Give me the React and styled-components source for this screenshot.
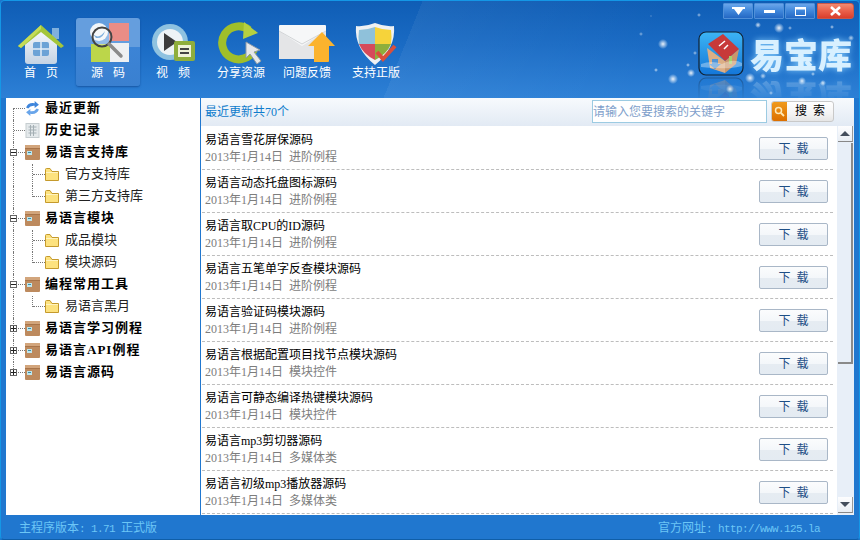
import React from 'react';
import styled, { createGlobalStyle } from 'styled-components';

const GlobalStyle = createGlobalStyle`
  html, body { margin: 0; padding: 0; background: #1f75cc; }
  * { box-sizing: border-box; }
`;

const CJK = '"Liberation Serif", "Noto Sans CJK SC", serif';
const MONO = '"Liberation Mono", "Noto Sans CJK SC", monospace';

const star = (x, y, r, a = 0.9) =>
  `radial-gradient(circle ${r}px at ${x}px ${y}px, rgba(255,255,255,${a}), rgba(255,255,255,0))`;

const stars = [
  [662, 43, 5], [672, 78, 5], [690, 72, 4], [655, 69, 2, 0.7], [687, 64, 2, 0.7], [698, 14, 2, 0.6],
  [694, 52, 2, 0.6], [778, 27, 5], [757, 24, 3, 0.8], [789, 27, 2, 0.6], [749, 77, 5], [729, 88, 4],
  [801, 80, 4], [762, 75, 3, 0.7], [822, 82, 3, 0.8], [812, 73, 2, 0.7], [831, 26, 2, 0.7], [850, 37, 3, 0.7],
  [640, 33, 2, 0.5], [650, 15, 1, 0.4], [845, 60, 2, 0.6], [770, 92, 2, 0.6],
].map((s) => star(...s)).join(', ');

const Window = styled.div`
  width: 860px;
  height: 540px;
  display: flex;
  flex-direction: column;
  overflow: hidden;
  background: #2077cf;
  border: 1px solid #1497e6;
  border-bottom-color: #0f5ea8;
  border-radius: 5px 5px 4px 4px;
  font-family: ${CJK};
`;

const Header = styled.header`
  flex: 0 0 97px;
  display: flex;
  justify-content: space-between;
  overflow: hidden;
  background: ${stars},
    linear-gradient(112deg, rgba(255,255,255,0) 47%, rgba(255,255,255,.05) 47%, rgba(255,255,255,0) 75%),
    linear-gradient(180deg, #0f5db5 0%, #1a6bc4 45%, #2d80d6 100%);
`;

const Toolbar = styled.nav`
  display: flex;
  gap: 2px;
  padding: 17px 0 0 7px;
`;

const ToolButton = styled.div`
  width: ${(p) => p.$width}px;
  height: 68px;
  display: flex;
  flex-direction: column;
  align-items: center;
  padding-top: 4px;
  color: #fff;
  border-radius: 3px;
  background: ${(p) =>
    p.$active ? 'linear-gradient(180deg, #659ede 0%, #659ede 42%, #3c84d6 43%, #3a80d0 100%)' : 'none'};
  box-shadow: ${(p) => (p.$active ? '0 1px 2px rgba(10,60,130,.6)' : 'none')};

  svg { display: block; width: ${(p) => p.$iconWidth || 50}px; height: 44px; flex: none; }
`;

const ToolLabel = styled.span`
  font-size: 12px;
  line-height: 15px;
  word-spacing: 2px;
  white-space: pre;
`;

const Brand = styled.div`
  width: 160px;
  display: flex;
  flex-direction: column;
  align-items: flex-end;
`;

const WindowControls = styled.div`
  display: flex;
  gap: 1px;
  margin-top: 2px;
  margin-right: 5px;
`;

const ControlButton = styled.div`
  width: ${(p) => (p.$close ? 37 : 30)}px;
  margin-left: ${(p) => (p.$close ? 1 : 0)}px;
  height: 16px;
  display: flex;
  align-items: center;
  justify-content: center;
  border: 1px solid ${(p) => (p.$close ? '#c8584a' : '#4f8fd8')};
  border-radius: ${(p) => (p.$close ? '0 3px 3px 0' : '1px')};
  background: ${(p) =>
    p.$close
      ? 'linear-gradient(180deg, #f08a70 0%, #e9604a 50%, #d93e2c 100%)'
      : 'linear-gradient(180deg, #6aa6ea 0%, #3f86da 50%, #2468c4 100%)'};

  svg { display: block; }
`;

const LogoRow = styled.div`
  display: flex;
  align-items: center;
  gap: 6px;
  margin: 12px 7px 0 0;
  -webkit-box-reflect: below -1px linear-gradient(rgba(0,0,0,0) 45%, rgba(255,255,255,.35));
`;

const LogoTile = styled.svg`
  width: 46px;
  height: 46px;
  flex: none;
`;

const LogoText = styled.div`
  font-family: "Noto Sans CJK SC", sans-serif;
  font-weight: 900;
  font-size: 34px;
  line-height: 40px;
  white-space: nowrap;
  width: 102px;
  color: #d8f0ff;
  text-shadow: 0 0 6px rgba(140, 210, 255, .9);
`;

const Body = styled.div`
  flex: 1;
  min-height: 0;
  display: flex;
  margin: 0 5px;
`;

const Sidebar = styled.aside`
  flex: 0 0 194px;
  background: #fff;
`;

const TreeRow = styled.div`
  position: relative;
  height: 22px;
  display: flex;
  align-items: center;
  padding-left: ${(p) => (p.$child ? 39 : 19)}px;
  padding-bottom: 2px;

  /* trunk of the tree */
  &::before {
    content: '';
    position: absolute;
    left: 7px;
    top: ${(p) => (p.$first ? '10px' : '0')};
    bottom: ${(p) => (p.$last ? '11px' : '0')};
    border-left: 1px dotted #777;
  }

  /* guide line of a child row */
  &::after {
    content: ${(p) => (p.$child ? "''" : 'none')};
    position: absolute;
    left: 26px;
    top: 0;
    bottom: ${(p) => (p.$lastChild ? '11px' : '0')};
    border-left: 1px dotted #777;
  }

  svg { flex: none; position: relative; }
`;

const Tick = styled.span`
  position: absolute;
  left: ${(p) => (p.$child ? 27 : 8)}px;
  width: ${(p) => (p.$child ? 12 : 11)}px;
  top: 10px;
  border-top: 1px dotted #777;
`;

const Expander = styled.span`
  position: absolute;
  z-index: 1;
  left: 4px;
  top: 7px;
  width: 7px;
  height: 7px;
  background: #fff;
  border: 1px solid #666;

  &::before {
    content: '';
    position: absolute;
    left: 0;
    right: 0;
    top: 2px;
    border-top: 1px solid #222;
  }

  &::after {
    content: ${(p) => (p.$closed ? "''" : 'none')};
    position: absolute;
    top: 0;
    bottom: 0;
    left: 2px;
    border-left: 1px solid #222;
  }
`;

const TreeLabel = styled.span`
  margin-left: ${(p) => (p.$child ? 6 : 5)}px;
  font-size: 13px;
  line-height: 16px;
  letter-spacing: ${(p) => (p.$child ? 0 : 1)}px;
  font-weight: ${(p) => (p.$child ? 400 : 700)};
  color: ${(p) => (p.$child ? '#222' : '#000')};
  white-space: nowrap;
`;

const Main = styled.main`
  flex: 1;
  min-width: 0;
  display: flex;
  flex-direction: column;
  margin-left: 1px;
  background: #fff;
`;

const TopBar = styled.div`
  flex: 0 0 28px;
  display: flex;
  align-items: center;
  padding: 0 20px 2px 4px;
  background: linear-gradient(180deg, #f7fafd 0%, #e2eaf4 100%);
`;

const Count = styled.span`
  flex: 1;
  color: #0f7ccc;
  font-size: 12px;
  line-height: 16px;
  padding-top: 1px;
`;

const SearchField = styled.div`
  width: 175px;
  height: 23px;
  display: flex;
  align-items: center;
  background: #fff;
  border: 1px solid #9ccbe2;
  color: #7f9fcb;
  font-size: 12px;
`;

const SearchButton = styled.div`
  width: 63px;
  height: 21px;
  margin-left: 4px;
  display: flex;
  overflow: hidden;
  border: 1px solid #c9c9c9;
  border-radius: 3px;
  background: linear-gradient(180deg, #fff 0%, #f4f4f4 60%, #e6e6e6 100%);
`;

const SearchIcon = styled.div`
  flex: 0 0 15px;
  display: flex;
  align-items: center;
  justify-content: center;
  background: linear-gradient(180deg, #f09a1c 0%, #dc6f00 100%);
`;

const SearchLabel = styled.div`
  flex: 1;
  text-align: center;
  font-size: 12px;
  line-height: 19px;
  color: #000;
  white-space: pre;
`;

const Content = styled.div`
  flex: 1;
  min-height: 0;
  display: flex;
`;

const List = styled.div`
  flex: 1;
  min-width: 0;
  padding: 1px 4px 0 1px;
`;

const Row = styled.div`
  height: 43px;
  display: flex;
  align-items: center;
  justify-content: space-between;
  border-bottom: 1px dashed #bdbdbd;
  padding: 0 5px 0 3px;
`;

const RowText = styled.div`
  display: flex;
  flex-direction: column;
  padding-top: 1px;
`;

const RowTitle = styled.div`
  font-size: 12px;
  line-height: 17px;
  color: #000;
  white-space: nowrap;
`;

const RowMeta = styled.div`
  font-size: 12px;
  line-height: 17px;
  color: #7d7d7d;
  white-space: nowrap;

  span { margin-left: 6px; }
`;

const DownloadButton = styled.div`
  width: 69px;
  height: 23px;
  margin-top: 1px;
  text-align: center;
  font-size: 12px;
  line-height: 23px;
  color: #1f4f86;
  white-space: pre;
  border: 1px solid #a9b7c7;
  border-radius: 2px;
  background: linear-gradient(180deg, #fbfcfd 0%, #f4f7fa 50%, #e6ecf2 52%, #e4ebf2 100%);
`;

const Scrollbar = styled.div`
  flex: 0 0 17px;
  display: flex;
  flex-direction: column;
  padding: 0 1px 2px 1px;
  background: #e8eff8;
`;

const ScrollArrow = styled.div`
  flex: 0 0 16px;
  display: flex;
  align-items: center;
  justify-content: center;
  background: linear-gradient(180deg, #fdfdfe 0%, #e9eef4 100%);
  border-right: 1px solid #999;
  border-bottom: 1px solid #888;

  &::before {
    content: '';
    border-left: 5px solid transparent;
    border-right: 5px solid transparent;
    ${(p) => (p.$down ? 'border-top' : 'border-bottom')}: 5px solid #444e5c;
  }
`;

const ScrollThumb = styled.div`
  flex: 0 0 221px;
  margin-top: 1px;
  background: #e8eff8;
  border-right: 2px solid #8a8a8a;
  border-bottom: 2px solid #8a8a8a;
`;

const ScrollGap = styled.div`
  flex: 1;
`;

const StatusBar = styled.footer`
  flex: 0 0 24px;
  display: flex;
  justify-content: space-between;
  align-items: center;
  padding: 0 39px 0 18px;
  font-size: 12px;
  color: #6cc6f6;
  white-space: pre;
`;

const Mono = styled.span`
  font-family: ${MONO};
  font-size: 11px;
  letter-spacing: -0.6px;
`;

const tree = [
  { label: '最近更新', icon: 'refresh', first: true },
  { label: '历史记录', icon: 'history' },
  { label: '易语言支持库', icon: 'box', open: true },
  { label: '官方支持库', child: true },
  { label: '第三方支持库', child: true, lastChild: true },
  { label: '易语言模块', icon: 'box', open: true },
  { label: '成品模块', child: true },
  { label: '模块源码', child: true, lastChild: true },
  { label: '编程常用工具', icon: 'box', open: true },
  { label: '易语言黑月', child: true, lastChild: true },
  { label: '易语言学习例程', icon: 'box', closed: true },
  { label: '易语言API例程', icon: 'box', closed: true },
  { label: '易语言源码', icon: 'box', closed: true, last: true },
];

const rows = [
  ['易语言雪花屏保源码', '进阶例程'],
  ['易语言动态托盘图标源码', '进阶例程'],
  ['易语言取CPU的ID源码', '进阶例程'],
  ['易语言五笔单字反查模块源码', '进阶例程'],
  ['易语言验证码模块源码', '进阶例程'],
  ['易语言根据配置项目找节点模块源码', '模块控件'],
  ['易语言可静态编译热键模块源码', '模块控件'],
  ['易语言mp3剪切器源码', '多媒体类'],
  ['易语言初级mp3播放器源码', '多媒体类'],
];

const HomeIcon = () => (
  <svg viewBox="0 0 50 44">
    <defs>
      <linearGradient id="homeWall" x1="0" y1="0" x2="0" y2="1">
        <stop offset="0" stopColor="#f6f8fb" />
        <stop offset="1" stopColor="#c3d3e4" />
      </linearGradient>
    </defs>
    <rect x="36" y="6" width="7" height="11" fill="#7fb0dd" />
    <path d="M9 22 L25 8 L41 22 V39 Q41 42 38 42 H12 Q9 42 9 39 Z" fill="url(#homeWall)" />
    <path d="M2 24 L25 3 L48 24 L45 26 L25 10 L5 26 Z" fill="#a4c63a" />
    <path d="M2 24 L25 3 L25 7 L5 26 Z" fill="#c4dc58" />
    <rect x="17" y="20" width="16" height="14" rx="2" fill="#6ca3d6" />
    <path d="M25 20 V34 M17 27 H33" stroke="#e4eef7" strokeWidth="1.5" />
  </svg>
);

const SourceIcon = () => (
  <svg viewBox="0 0 50 44">
    <circle cx="16" cy="10" r="9" fill="#f2f5f8" />
    <path d="M10 12 Q16 18 22 9 Q20 17 13 16 Z" fill="#4b8fd0" />
    <rect x="26" y="1" width="20" height="18" fill="#ea8d86" />
    <rect x="8" y="22" width="19" height="18" fill="#bcd64a" />
    <rect x="27" y="21" width="19" height="19" fill="#eef0f2" />
    <circle cx="19" cy="15" r="9.5" fill="rgba(255,255,255,.3)" stroke="#444" strokeWidth="2" />
    <path d="M26 22 L38 34" stroke="#8a8a8a" strokeWidth="3.5" strokeLinecap="round" />
  </svg>
);

const VideoIcon = () => (
  <svg viewBox="0 0 50 44">
    <circle cx="22" cy="20" r="18" fill="#8fc2e0" />
    <circle cx="22" cy="20" r="13" fill="#eef3f6" />
    <path d="M16 11 L29 20 L16 29 Z" fill="#3b3b3b" />
    <rect x="26" y="19" width="21" height="20" rx="2" fill="#8fae3c" />
    <rect x="30" y="23" width="13" height="12" fill="#eef2d8" />
    <path d="M32 27 H41 M32 31 H41" stroke="#444" strokeWidth="2" />
  </svg>
);

const ShareIcon = () => (
  <svg viewBox="0 0 50 44">
    <path d="M38 27 A16.5 16.5 0 1 1 33 8" fill="none" stroke="#a0bf2a" strokeWidth="8" />
    <path d="M28 0 L42 11 L27 17 Z" fill="#b6d040" />
    <path d="M30 20 L30 36 L34 32 L41 42 L45 39 L38 30 L44 28 Z" fill="#e6e8ea" stroke="#8d9aa6" strokeWidth="1" />
  </svg>
);

const MailIcon = () => (
  <svg viewBox="0 0 56 44">
    <rect x="0" y="3" width="47" height="34" rx="1" fill="#f6f7f8" />
    <path d="M0 9 L23 24 L47 9 V37 H0 Z" fill="#e4e5e7" />
    <path d="M0 9 L23 22 L47 9" fill="none" stroke="#d2d4d6" strokeWidth="1" />
    <path d="M35 40 V24 H29 L43 10 L56 24 H50 V39 Q50 40 49 40 Z" fill="#fbb32e" />
  </svg>
);

const ShieldIcon = () => (
  <svg viewBox="0 0 50 44">
    <path d="M24 1 Q34 5 43 4 Q45 26 24 43 Q3 26 5 4 Q14 5 24 1 Z" fill="#eef1f3" />
    <path d="M24 5 V22 H8 Q7 14 8 8 Q16 8 24 5 Z" fill="#8fc1da" />
    <path d="M24 5 Q32 8 40 8 Q41 14 40 22 H24 Z" fill="#f6d33a" />
    <path d="M8 22 H24 V38 Q12 32 8 22 Z" fill="#d64a5a" />
    <path d="M24 22 H40 Q36 32 24 38 Z" fill="#8fae3c" />
    <path d="M26 30 L32 37 L44 24" fill="none" stroke="#d94f3c" strokeWidth="4" />
  </svg>
);

const toolIcons = {
  home: <HomeIcon />,
  source: <SourceIcon />,
  video: <VideoIcon />,
  share: <ShareIcon />,
  mail: <MailIcon />,
  shield: <ShieldIcon />,
};

const tools = [
  { label: '首  页', icon: 'home', width: 66 },
  { label: '源  码', icon: 'source', width: 64, active: true },
  { label: '视  频', icon: 'video', width: 62 },
  { label: '分享资源', icon: 'share', width: 70 },
  { label: '问题反馈', icon: 'mail', width: 58, iconWidth: 56 },
  { label: '支持正版', icon: 'shield', width: 76 },
];

const BoxIcon = () => (
  <svg width="15" height="15" viewBox="0 0 15 15">
    <rect x="0" y="0" width="15" height="15" rx="1" fill="#bd8a5e" />
    <rect x="0" y="0" width="15" height="3" fill="#d2a57c" />
    <rect x="0" y="3" width="15" height="1" fill="#a87449" />
    <rect x="2" y="6" width="5" height="4" fill="#bfe6ee" />
    <rect x="3" y="7" width="3" height="1" fill="#3b8fa8" />
  </svg>
);

const FolderIcon = () => (
  <svg width="14" height="13" viewBox="0 0 14 13">
    <path d="M.5 12.5 V1.5 Q.5 .5 1.5 .5 H5 L7 3.5 H13.5 V12.5 Z" fill="#fde27e" stroke="#c59a2c" />
    <rect x="1" y="4" width="12" height="1" fill="#fff3bf" />
  </svg>
);

const RefreshIcon = () => (
  <svg width="15" height="15" viewBox="0 0 14 14">
    <path d="M1 6 Q3 1 9 2 L9 0 L13 3.5 L9 6.5 L9 4.5 Q5 4 3 7 Z" fill="#3f86dc" />
    <path d="M13 8 Q11 13 5 12 L5 14 L1 10.5 L5 7.5 L5 9.5 Q9 10 11 7 Z" fill="#69a5ea" />
  </svg>
);

const HistoryIcon = () => (
  <svg width="15" height="15" viewBox="0 0 14 15">
    <rect x=".5" y=".5" width="13" height="14" fill="#e4e9eb" stroke="#c6cdd0" />
    <path d="M3 4 H11 M3 7 H11 M3 10 H11 M5 2 V13 M8 2 V13" stroke="#a4afb4" strokeWidth="1" />
  </svg>
);

const treeIcons = { box: <BoxIcon />, refresh: <RefreshIcon />, history: <HistoryIcon /> };

const App = () => (
  <Window>
    <GlobalStyle />
    <Header>
      <Toolbar>
        {tools.map((tool) => (
          <ToolButton key={tool.icon} $width={tool.width} $active={tool.active} $iconWidth={tool.iconWidth}>
            {toolIcons[tool.icon]}
            <ToolLabel>{tool.label}</ToolLabel>
          </ToolButton>
        ))}
      </Toolbar>
      <Brand>
        <WindowControls>
          <ControlButton>
            <svg width="13" height="9" viewBox="0 0 13 9">
              <path d="M0 0 H13 V2 H11 L6.5 8 L2 2 H0 Z" fill="#fff" />
            </svg>
          </ControlButton>
          <ControlButton>
            <svg width="11" height="3" viewBox="0 0 11 3"><rect width="11" height="3" fill="#fff" /></svg>
          </ControlButton>
          <ControlButton>
            <svg width="11" height="9" viewBox="0 0 11 9">
              <rect x=".5" y="1" width="10" height="7.5" fill="none" stroke="#fff" />
              <rect width="11" height="2.5" fill="#fff" />
            </svg>
          </ControlButton>
          <ControlButton $close>
            <svg width="11" height="10" viewBox="0 0 11 10">
              <path d="M1 1 L10 9 M10 1 L1 9" stroke="#fff" strokeWidth="2.6" />
            </svg>
          </ControlButton>
        </WindowControls>
        <LogoRow>
          <LogoTile viewBox="0 0 46 46">
            <defs>
              <linearGradient id="tile" x1="0" y1="0" x2="0" y2="1">
                <stop offset="0" stopColor="#3cb4f4" />
                <stop offset="1" stopColor="#1476d8" />
              </linearGradient>
            </defs>
            <rect x="1" y="1" width="44" height="43" rx="7" fill="url(#tile)" stroke="#123" strokeWidth="1.2" />
            <path d="M9 17 L27 30 V42 L12 37 Z" fill="#dcae85" />
            <path d="M27 30 L41 18 L38 33 L27 42 Z" fill="#c9966c" />
            <path d="M10 13 L25 3 L41 18 L27 30 Z" fill="#c73a3a" />
            <path d="M21 15 L27 10 M26 18 L30 14" stroke="#fff" strokeWidth="1.5" />
            <path d="M14 28 L20 28 L20 33 L23 33 L17 38 L11 33 L14 33 Z" fill="#4f95d8" />
            <rect x="31" y="25" width="3" height="8" fill="#a6d06a" />
            <path d="M3 33 Q14 29 24 33 Q36 27 44 32 V35 Q30 39 3 36 Z" fill="rgba(255,255,255,.35)" />
          </LogoTile>
          <LogoText>易宝库</LogoText>
        </LogoRow>
      </Brand>
    </Header>
    <Body>
      <Sidebar>
        {tree.map((node) => (
          <TreeRow
            key={node.label}
            $child={node.child}
            $first={node.first}
            $last={node.last}
            $lastChild={node.lastChild}
          >
            <Tick $child={node.child} />
            {(node.open || node.closed) && <Expander $closed={node.closed} />}
            {node.child ? <FolderIcon /> : treeIcons[node.icon]}
            <TreeLabel $child={node.child}>{node.label}</TreeLabel>
          </TreeRow>
        ))}
      </Sidebar>
      <Main>
        <TopBar>
          <Count>最近更新共70个</Count>
          <SearchField>请输入您要搜索的关键字</SearchField>
          <SearchButton>
            <SearchIcon>
              <svg width="11" height="11" viewBox="0 0 11 11">
                <circle cx="4.5" cy="4.5" r="3" fill="none" stroke="#ffe9b8" strokeWidth="1.5" />
                <path d="M7 7 L10 10" stroke="#ffe9b8" strokeWidth="1.8" />
              </svg>
            </SearchIcon>
            <SearchLabel>搜  索</SearchLabel>
          </SearchButton>
        </TopBar>
        <Content>
          <List>
            {rows.map(([title, category]) => (
              <Row key={title}>
                <RowText>
                  <RowTitle>{title}</RowTitle>
                  <RowMeta>
                    2013年1月14日<span>{category}</span>
                  </RowMeta>
                </RowText>
                <DownloadButton>下  载</DownloadButton>
              </Row>
            ))}
          </List>
          <Scrollbar>
            <ScrollArrow />
            <ScrollThumb />
            <ScrollGap />
            <ScrollArrow $down />
          </Scrollbar>
        </Content>
      </Main>
    </Body>
    <StatusBar>
      <span>主程序版本<Mono>: 1.71 </Mono>正式版</span>
      <span>官方网址<Mono>: http://www.125.la</Mono></span>
    </StatusBar>
  </Window>
);

export default App;
